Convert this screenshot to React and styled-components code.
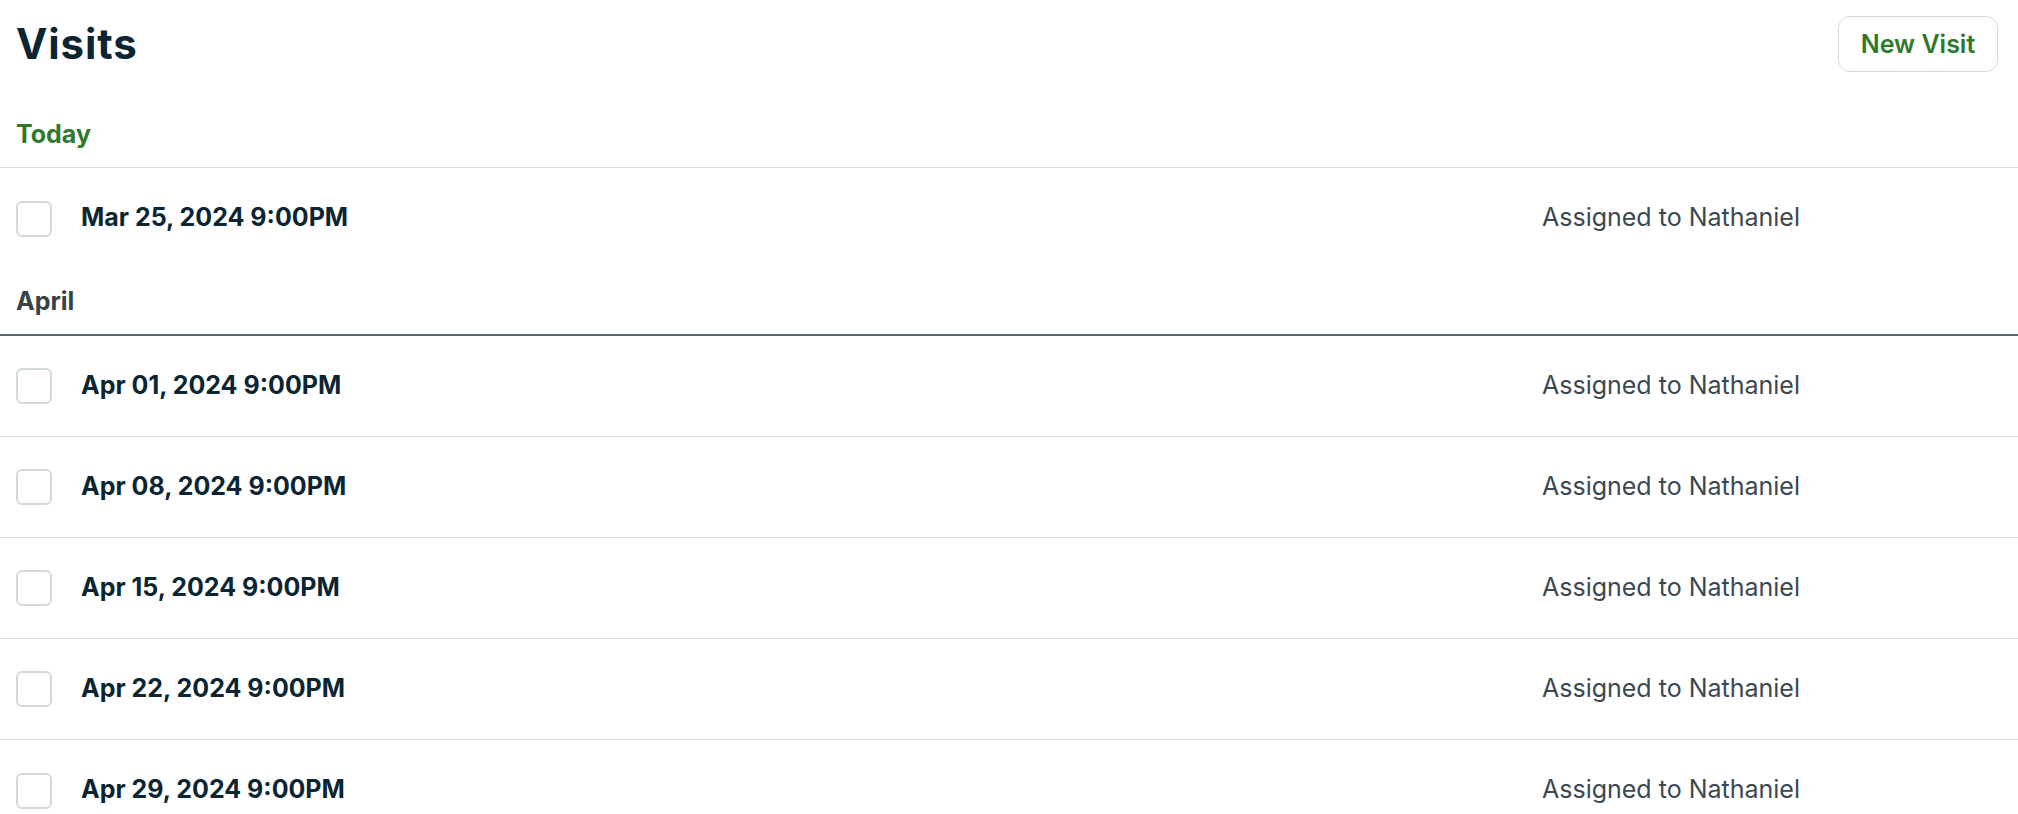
import React from "react";
import styled, { createGlobalStyle } from "styled-components";

const Global = createGlobalStyle`
  html, body { margin: 0; padding: 0; background: #ffffff; }
  body { font-family: Inter, "Noto Sans", sans-serif; -webkit-font-smoothing: antialiased; }
  * { box-sizing: border-box; }
`;

const Page = styled.div`
  width: 100%;
  display: flex;
  flex-direction: column;
`;

const Header = styled.header`
  display: flex;
  align-items: center;
  justify-content: space-between;
  padding: 16px 20px 30px 16px;
`;

const Title = styled.h1`
  margin: 0;
  font-size: 42px;
  line-height: 56px;
  font-weight: 700;
  color: #0c2533;
  letter-spacing: 0.9px;
`;

const Button = styled.button`
  height: 56px;
  width: 160px;
  border: 1px solid #d3dadd;
  border-radius: 12px;
  background: #ffffff;
  color: #2f7a2a;
  font-family: Inter, sans-serif;
  font-size: 25px;
  font-weight: 600;
  padding: 0;
  cursor: pointer;
`;

const SectionHeader = styled.div`
  padding: 16px 16px 17px;
  font-size: 25px;
  line-height: 32px;
  font-weight: 700;
  color: ${(p) => p.$color};
  border-bottom: ${(p) => p.$line};
`;

const Row = styled.div`
  display: flex;
  align-items: center;
  height: 101px;
  padding-left: 16px;
  border-bottom: ${(p) => (p.$divider ? "1px solid #dcdfe1" : "none")};
`;

const Checkbox = styled.span`
  width: 36px;
  height: 36px;
  border: 2px solid #d3dadd;
  border-radius: 6px;
  flex: none;
  margin-right: 29px;
`;

const DateText = styled.span`
  flex: 1;
  font-size: 25px;
  line-height: 32px;
  padding-bottom: 3px;
  font-weight: 700;
  color: #0c2533;
`;

const Assigned = styled.span`
  width: 476px;
  flex: none;
  font-size: 25px;
  line-height: 32px;
  padding-bottom: 3px;
  font-weight: 400;
  color: #3b4851;
`;

const april = [
  "Apr 01, 2024 9:00PM",
  "Apr 08, 2024 9:00PM",
  "Apr 15, 2024 9:00PM",
  "Apr 22, 2024 9:00PM",
  "Apr 29, 2024 9:00PM",
];

export default function App() {
  return (
    <>
      <Global />
      <Page>
        <Header>
          <Title>Visits</Title>
          <Button>New Visit</Button>
        </Header>
        <SectionHeader $color="#2e7a2a" $line="1px solid #d9dcde">
          Today
        </SectionHeader>
        <Row>
          <Checkbox />
          <DateText>Mar 25, 2024 9:00PM</DateText>
          <Assigned>Assigned to Nathaniel</Assigned>
        </Row>
        <SectionHeader $color="#384247" $line="2px solid #5b6770">
          April
        </SectionHeader>
        {april.map((d, i) => (
          <Row key={d} $divider={i < april.length - 1}>
            <Checkbox />
            <DateText>{d}</DateText>
            <Assigned>Assigned to Nathaniel</Assigned>
          </Row>
        ))}
      </Page>
    </>
  );
}
